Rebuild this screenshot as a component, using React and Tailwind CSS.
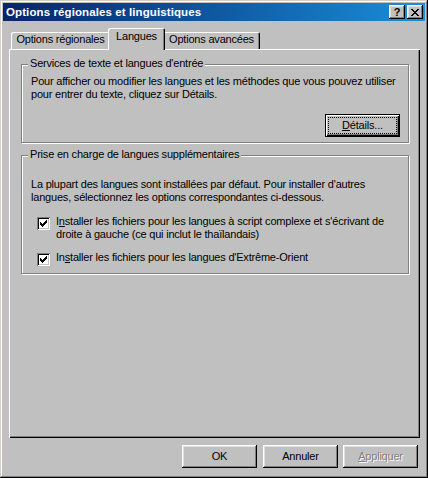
import React from "react";

const CHECK = ["......#", ".....##", "#...###", "##.###.", "#####..", ".###...", "..#...."];
const XPAT = ["##....##", ".##..##.", "..####..", "...##...", "..####..", ".##..##.", "##....##"];

function Pix({ pat, w, h }) {
  const rects = [];
  pat.forEach((row, y) =>
    [...row].forEach((c, x) => {
      if (c === "#") rects.push(<rect key={x + "-" + y} x={x} y={y} width="1" height="1" fill="#000" />);
    })
  );
  return (
    <svg width={w} height={h} viewBox={`0 0 ${w} ${h}`} shapeRendering="crispEdges">
      {rects}
    </svg>
  );
}

function Checkbox() {
  return (
    <span className="mt-[2px] w-[13px] h-[13px] shrink-0 bg-white flex items-center justify-center shadow-[inset_1px_1px_#808080,inset_-1px_-1px_#fff,inset_2px_2px_#000,inset_-2px_-2px_#c0c0c0]">
      <Pix pat={CHECK} w={7} h={7} />
    </span>
  );
}

function TitleBtn({ children }) {
  return (
    <div className="w-[16px] h-[14px] bg-[#c0c0c0] flex items-center justify-center shadow-[inset_-1px_-1px_#000,inset_1px_1px_#fff,inset_-2px_-2px_#808080,inset_2px_2px_#dfdfdf]">
      {children}
    </div>
  );
}

function Btn({ children, className = "", disabled = false }) {
  return (
    <div
      className={
        "w-[75px] h-[23px] bg-[#c0c0c0] flex items-center justify-center shadow-[inset_-1px_-1px_#000,inset_1px_1px_#fff,inset_-2px_-2px_#808080,inset_2px_2px_#dfdfdf] " +
        (disabled ? "text-[#808080] [text-shadow:1px_1px_#fff] " : "") +
        className
      }
    >
      {children}
    </div>
  );
}

function Group({ label, className = "", children }) {
  return (
    <div className={"border border-[#808080] shadow-[inset_1px_1px_#fff,1px_1px_#fff] px-[9px] flex flex-col " + className}>
      <div className="-mt-[8px] -ml-[3px] self-start bg-[#c0c0c0] px-[2px]">{label}</div>
      {children}
    </div>
  );
}

export default function App() {
  return (
    <div className="w-[428px] h-[478px] bg-[#c0c0c0] p-[3px] flex flex-col overflow-hidden text-[11px] leading-[13px] tracking-[-0.2px] text-black [font-family:'Liberation_Sans',Arial,sans-serif] shadow-[inset_-1px_-1px_#000,inset_1px_1px_#d4d0c8,inset_-2px_-2px_#808080,inset_2px_2px_#fff]">
      {/* Title bar */}
      <div className="h-[18px] shrink-0 flex items-center bg-linear-to-r from-[#0a246a] to-[#1a8fd9] pl-[3px] pr-[2px]">
        <span className="font-bold text-white text-[11.5px] tracking-[0.1px]">Options régionales et linguistiques</span>
        <div className="ml-auto flex gap-[2px]">
          <TitleBtn>
            <span className="font-bold text-[11px] leading-[11px] tracking-normal">?</span>
          </TitleBtn>
          <TitleBtn>
            <Pix pat={XPAT} w={8} h={7} />
          </TitleBtn>
        </div>
      </div>

      {/* Tabs */}
      <div className="h-[21px] mt-[7px] shrink-0 flex items-end pl-[8px]">
        <div className="w-[99px] h-[17px] pt-[1px] text-center rounded-t-[2px] shadow-[inset_1px_1px_#fff,inset_-1px_0_#000,inset_-2px_0_#808080]">
          Options régionales
        </div>
        <div className="relative z-10 -mx-[2px] -mb-px w-[57px] h-[22px] pt-[2px] text-center bg-[#c0c0c0] rounded-t-[2px] shadow-[inset_1px_1px_#fff,inset_-1px_0_#000,inset_-2px_0_#808080]">
          Langues
        </div>
        <div className="w-[97px] h-[17px] pt-[1px] text-center rounded-t-[2px] shadow-[inset_1px_1px_#fff,inset_-1px_0_#000,inset_-2px_0_#808080]">
          Options avancées
        </div>
      </div>

      {/* Panel */}
      <div className="ml-[6px] mr-[5px] h-[389px] shrink-0 pl-[12px] pr-[11px] pt-[15px] flex flex-col shadow-[inset_1px_1px_#fff,inset_-1px_-1px_#000,inset_-2px_-2px_#808080]">
        <Group label="Services de texte et langues d'entrée" className="h-[79px]">
          <p className="mt-[5px]">
            Pour afficher ou modifier les langues et les méthodes que vous pouvez utiliser
            <br />
            pour entrer du texte, cliquez sur Détails.
          </p>
          <div className="mt-[13px] self-end -mr-px w-[75px] h-[23px] border border-black p-[2px] bg-[#c0c0c0] shadow-[inset_1px_1px_#fff,inset_-1px_-1px_#000,inset_-2px_-2px_#808080]">
            <div className="w-full h-full border border-dotted border-black flex items-center justify-center">
              <span>
                <u>D</u>étails...
              </span>
            </div>
          </div>
        </Group>

        <Group label="Prise en charge de langues supplémentaires" className="mt-[12px] h-[119px]">
          <p className="mt-[17px]">
            La plupart des langues sont installées par défaut. Pour installer d'autres
            <br />
            langues, sélectionnez les options correspondantes ci-dessous.
          </p>
          <div className="mt-[11px] ml-[6px] flex items-start gap-[6px]">
            <Checkbox />
            <span>
              I<u>n</u>staller les fichiers pour les langues à script complexe et s'écrivant de
              <br />
              droite à gauche (ce qui inclut le thaïlandais)
            </span>
          </div>
          <div className="mt-[10px] ml-[6px] flex items-start gap-[6px]">
            <Checkbox />
            <span>
              In<u>s</u>taller les fichiers pour les langues d'Extrême-Orient
            </span>
          </div>
        </Group>
      </div>

      {/* Buttons */}
      <div className="mt-[7px] flex justify-end pr-[7px]">
        <Btn>OK</Btn>
        <Btn className="ml-[6px]">Annuler</Btn>
        <Btn className="ml-[5px]" disabled>
          <span>
            <u>A</u>ppliquer
          </span>
        </Btn>
      </div>
    </div>
  );
}
